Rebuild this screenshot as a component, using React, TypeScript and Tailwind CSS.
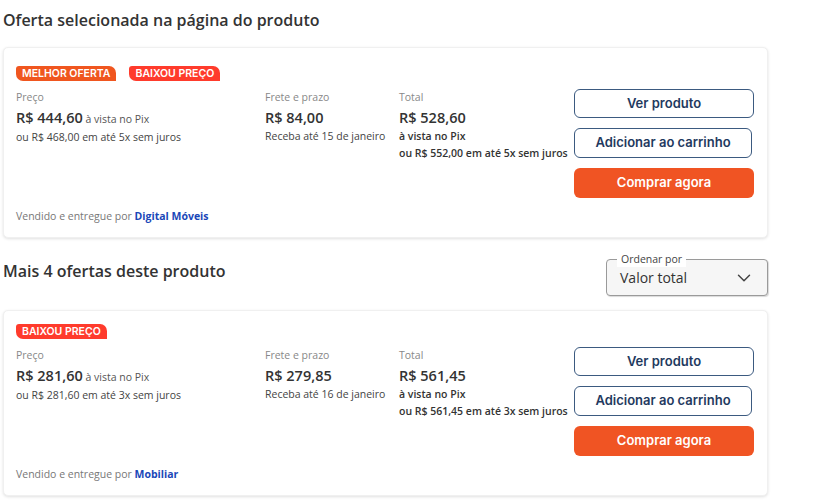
import { ChevronDown } from "lucide-react";

type Offer = {
  badges: { label: string; color: string }[];
  price: string;
  installment: string;
  freight: string;
  delivery: string;
  total: string;
  totalInstallment: string;
  seller: string;
  top: string;
};

const offers: Offer[] = [
  {
    badges: [
      { label: "MELHOR OFERTA", color: "bg-[#f0561f]" },
      { label: "BAIXOU PREÇO", color: "bg-[#ff3b2c]" },
    ],
    price: "R$ 444,60",
    installment: "ou R$ 468,00 em até 5x sem juros",
    freight: "R$ 84,00",
    delivery: "Receba até 15 de janeiro",
    total: "R$ 528,60",
    totalInstallment: "ou R$ 552,00 em até 5x sem juros",
    seller: "Digital Móveis",
    top: "pt-[18px]",
  },
  {
    badges: [{ label: "BAIXOU PREÇO", color: "bg-[#ff3b2c]" }],
    price: "R$ 281,60",
    installment: "ou R$ 281,60 em até 3x sem juros",
    freight: "R$ 279,85",
    delivery: "Receba até 16 de janeiro",
    total: "R$ 561,45",
    totalInstallment: "ou R$ 561,45 em até 3x sem juros",
    seller: "Mobiliar",
    top: "pt-[13px]",
  },
];

function Badge({ label, color }: { label: string; color: string }) {
  return (
    <span
      className={`${color} h-[15px] px-[6px] flex items-center text-white text-[10.5px] font-semibold rounded-tl-[3px] rounded-bl-[7px] rounded-tr-[7px] rounded-br-none font-['Inter',sans-serif]`}
    >
      {label}
    </span>
  );
}

function OfferCard({ offer }: { offer: Offer }) {
  return (
    <div className={`bg-white rounded-[5px] border border-[#f0f0f0] shadow-[0_1px_3px_rgba(0,0,0,0.12)] pl-[12px] pr-[13px] pb-[13px] ${offer.top}`}>
      <div className="flex gap-[13px]">
        {offer.badges.map((b) => (
          <Badge key={b.label} {...b} />
        ))}
      </div>
      <div className="flex mt-[8px]">
        <div className="grid grid-cols-[249px_134px_1fr] flex-1 text-[10.5px] leading-4">
          <div>
            <div className="text-[#888]">Preço</div>
            <div className="mt-[3px] leading-5 text-[#333]">
              <span className="text-[14.5px] font-semibold">{offer.price}</span>
              <span className="text-[10.5px] text-[#555]"> à vista no Pix</span>
            </div>
            <div className="text-[#444]">{offer.installment}</div>
          </div>
          <div>
            <div className="text-[#888]">Frete e prazo</div>
            <div className="mt-[3px] leading-5 text-[14.5px] font-semibold text-[#333]">{offer.freight}</div>
            <div className="text-[#444]">{offer.delivery}</div>
          </div>
          <div>
            <div className="text-[#888]">Total</div>
            <div className="mt-[3px] leading-5 text-[14.5px] font-semibold text-[#333]">{offer.total}</div>
            <div className="font-semibold text-[#333] leading-[17px]">à vista no Pix</div>
            <div className="font-semibold text-[#333] leading-[17px]">{offer.totalInstallment}</div>
          </div>
        </div>
        <div className="w-[180px] flex flex-col gap-[10px] font-['Inter',sans-serif] text-[13px] font-semibold">
          <button className="h-[29px] rounded-[6px] border border-[#3b5a80] text-[#1f3a60] bg-white">
            Ver produto
          </button>
          <button className="h-[30px] w-[178px] rounded-[6px] border border-[#3b5a80] text-[#1f3a60] bg-white">
            Adicionar ao carrinho
          </button>
          <button className="h-[30px] rounded-[6px] bg-[#f05423] text-white">Comprar agora</button>
        </div>
      </div>
      <div className="mt-[10px] text-[10.5px] leading-4 text-[#777]">
        Vendido e entregue por <span className="font-bold text-[#1a47b8]">{offer.seller}</span>
      </div>
    </div>
  );
}

export default function App() {
  return (
    <div className="w-[818px] h-[500px] bg-white px-[3px] pt-[8px] font-['Open_Sans',sans-serif] text-[#333] overflow-hidden">
      <div className="w-[765px]">
        <h2 className="text-[16px] leading-6 font-semibold text-[#333]">
          Oferta selecionada na página do produto
        </h2>
        <div className="mt-[15px]">
          <OfferCard offer={offers[0]} />
        </div>
        <div className="flex items-start justify-between mt-[21px] mb-[14px]">
          <h2 className="text-[16px] leading-6 font-semibold text-[#333]">
            Mais 4 ofertas deste produto
          </h2>
          <div className="relative w-[162px] h-[37px] rounded-[4px] border border-[#9a9a9a] bg-[#f6f6f6] shadow-[1px_1px_1px_rgba(0,0,0,0.15)] flex items-center justify-between pl-[13px] pr-[12px]">
            <span className="absolute -top-[9px] left-[10px] bg-white px-[4px] text-[10.5px] leading-4 text-[#444]">
              Ordenar por
            </span>
            <span className="text-[14px] text-[#333]">Valor total</span>
            <ChevronDown className="w-[22px] h-[22px] text-[#444]" strokeWidth={1.6} />
          </div>
        </div>
        <OfferCard offer={offers[1]} />
      </div>
    </div>
  );
}
